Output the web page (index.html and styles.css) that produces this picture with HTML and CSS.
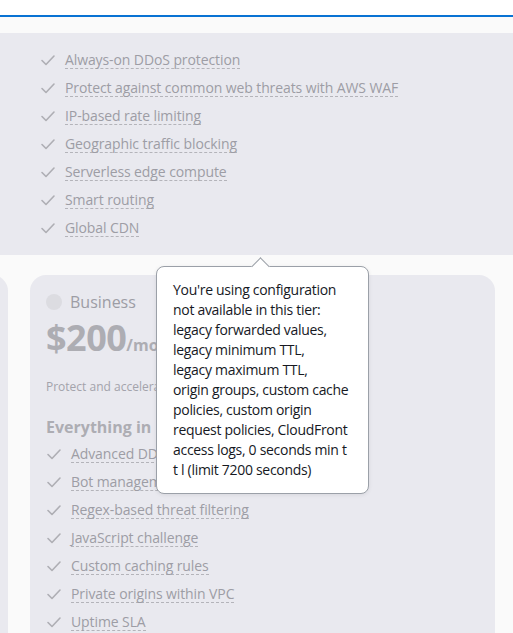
FILE: index.html
```html
<!DOCTYPE html>
<html>
<head>
<meta charset="utf-8">
<link rel="stylesheet" href="styles.css">
</head>
<body>
<div class="topbar"></div>
<div class="band"></div>
<section class="hero">
  <ul class="features">
    <li><svg class="chk" viewBox="0 0 16 16"><path d="M2 8.5 L6 12.5 L14 4"/></svg><span>Always-on DDoS protection</span></li>
    <li><svg class="chk" viewBox="0 0 16 16"><path d="M2 8.5 L6 12.5 L14 4"/></svg><span>Protect against common web threats with AWS WAF</span></li>
    <li><svg class="chk" viewBox="0 0 16 16"><path d="M2 8.5 L6 12.5 L14 4"/></svg><span>IP-based rate limiting</span></li>
    <li><svg class="chk" viewBox="0 0 16 16"><path d="M2 8.5 L6 12.5 L14 4"/></svg><span>Geographic traffic blocking</span></li>
    <li><svg class="chk" viewBox="0 0 16 16"><path d="M2 8.5 L6 12.5 L14 4"/></svg><span>Serverless edge compute</span></li>
    <li><svg class="chk" viewBox="0 0 16 16"><path d="M2 8.5 L6 12.5 L14 4"/></svg><span>Smart routing</span></li>
    <li><svg class="chk" viewBox="0 0 16 16"><path d="M2 8.5 L6 12.5 L14 4"/></svg><span>Global CDN</span></li>
  </ul>
</section>
<div class="stage">
  <div class="cards">
    <div class="card card-prev"></div>
    <div class="card card-business">
      <div class="tier"><span class="radio"></span><span class="tier-name">Business</span></div>
      <div class="price"><span class="amount">$200</span><span class="per">/mo</span></div>
      <p class="desc">Protect and accelerate your business applications</p>
      <h3 class="everything">Everything in Pro, plus:</h3>
      <ul class="features card-features">
        <li><svg class="chk" viewBox="0 0 16 16"><path d="M2 8.5 L6 12.5 L14 4"/></svg><span>Advanced DDoS protection</span></li>
        <li><svg class="chk" viewBox="0 0 16 16"><path d="M2 8.5 L6 12.5 L14 4"/></svg><span>Bot management</span></li>
        <li><svg class="chk" viewBox="0 0 16 16"><path d="M2 8.5 L6 12.5 L14 4"/></svg><span>Regex-based threat filtering</span></li>
        <li><svg class="chk" viewBox="0 0 16 16"><path d="M2 8.5 L6 12.5 L14 4"/></svg><span>JavaScript challenge</span></li>
        <li><svg class="chk" viewBox="0 0 16 16"><path d="M2 8.5 L6 12.5 L14 4"/></svg><span>Custom caching rules</span></li>
        <li><svg class="chk" viewBox="0 0 16 16"><path d="M2 8.5 L6 12.5 L14 4"/></svg><span>Private origins within VPC</span></li>
        <li><svg class="chk" viewBox="0 0 16 16"><path d="M2 8.5 L6 12.5 L14 4"/></svg><span>Uptime SLA</span></li>
      </ul>
    </div>
  </div>
  <div class="tooltip">
    <span class="arrow"></span>
    <span class="tl">You're using configuration</span><br>
    <span class="tl">not available in this tier:</span><br>
    <span class="tl">legacy forwarded values,</span><br>
    <span class="tl">legacy minimum TTL,</span><br>
    <span class="tl">legacy maximum TTL,</span><br>
    <span class="tl">origin groups, custom cache</span><br>
    <span class="tl">policies, custom origin</span><br>
    <span class="tl">request policies, CloudFront</span><br>
    <span class="tl">access logs, 0 seconds min t</span><br>
    <span class="tl">t l (limit 7200 seconds)</span>
  </div>
</div>
</body>
</html>
```
FILE: styles.css
```css
* { box-sizing: border-box; }
html, body { margin: 0; padding: 0; }
body {
  width: 513px;
  height: 633px;
  overflow: hidden;
  background: #fafafa;
  font-family: "Open Sans", "Noto Sans", sans-serif;
  color: #16191f;
}
.topbar {
  height: 17px;
  background: #ffffff;
  border-bottom: 2px solid #0972d3;
}
.band {
  height: 16px;
  background: #fafafa;
}
.hero {
  background: #e9e9ef;
  height: 222px;
  padding: 13px 0 0 40px;
}
.features {
  list-style: none;
  margin: 0;
  padding: 0;
}
.features li {
  display: flex;
  align-items: center;
  height: 28px;
  font-size: 14px;
  color: #9d9da5;
}
.chk {
  width: 16px;
  height: 16px;
  margin-right: 9px;
  fill: none;
  stroke: #aeaeb4;
  stroke-width: 1.6;
  stroke-linecap: round;
  stroke-linejoin: round;
}
.features span {
  border-bottom: 1px dashed #b4b4ba;
  line-height: 17px;
  letter-spacing: -0.1px;
}
.stage {
  position: relative;
  height: 378px;
  overflow: hidden;
}
.cards {
  display: flex;
  gap: 22px;
  padding-top: 20px;
  margin-left: -457px;
}
.card {
  flex: none;
  background: #e9e9ef;
  border-radius: 16px;
  height: 400px;
}
.card-prev { width: 465px; }
.card-business {
  width: 465px;
  padding: 17px 16px;
}
.tier {
  display: flex;
  align-items: center;
  gap: 8px;
  height: 20px;
}
.radio {
  width: 16px;
  height: 16px;
  border-radius: 50%;
  background: #dcdce1;
}
.tier-name {
  font-size: 16px;
  color: #9d9da5;
}
.price {
  margin-top: 1px;
  color: #adadb3;
  font-weight: 700;
  height: 46px;
}
.amount { font-size: 36px; letter-spacing: -0.5px; }
.per { font-size: 16px; }
.desc {
  margin: 19px 0 0;
  font-size: 12px;
  color: #a3a3ab;
}
.everything {
  margin: 21px 0 0;
  font-size: 16px;
  font-weight: 700;
  color: #adadb3;
}
.card-features { margin-top: 2px; }
.tooltip {
  position: absolute;
  left: 156px;
  top: 11px;
  width: 213px;
  height: 228px;
  background: #ffffff;
  border: 1px solid #9ba0a8;
  border-radius: 8px;
  padding: 13px 16px;
  font-size: 14px;
  line-height: 20px;
  color: #16191f;
  box-shadow: 0 1px 4px rgba(0,0,0,0.08);
  white-space: nowrap;
}
.tl { letter-spacing: -0.3px; }
.arrow {
  position: absolute;
  left: 97px;
  top: -7px;
  width: 13px;
  height: 13px;
  background: #ffffff;
  border-left: 1px solid #9ba0a8;
  border-top: 1px solid #9ba0a8;
  transform: rotate(45deg);
}
```
